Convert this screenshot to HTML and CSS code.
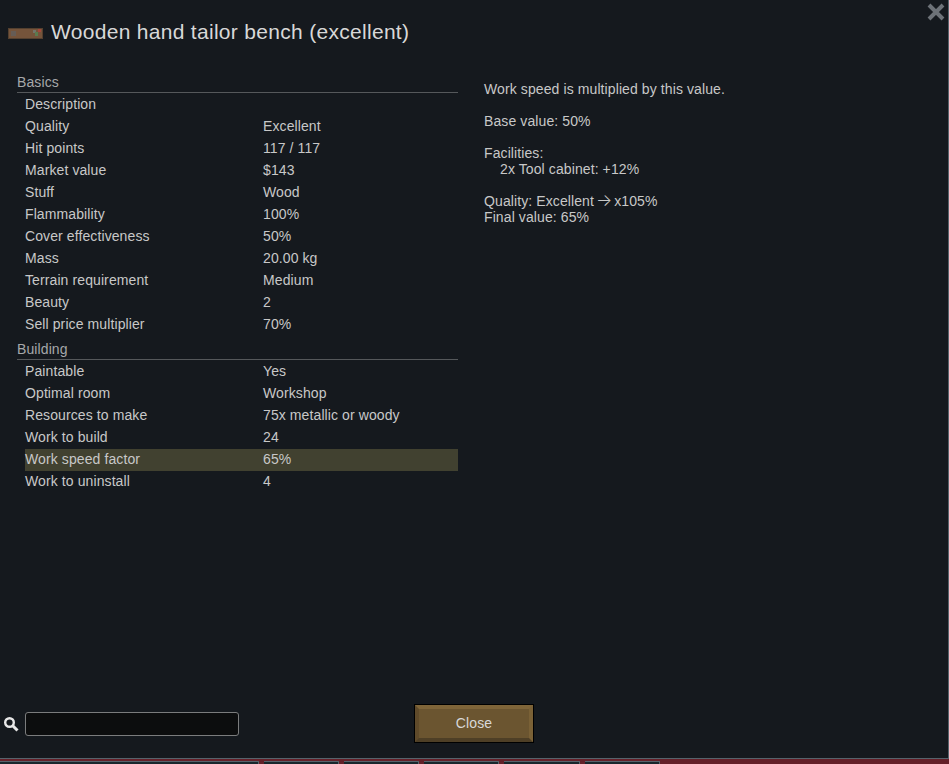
FILE: index.html
```html
<!DOCTYPE html>
<html lang="en">
<head>
    <meta charset="UTF-8">
    <link rel="stylesheet" href="styles.css">
    <title>Wooden hand tailor bench</title>
</head>
<body>
    <div class="panel">
        <svg class="close-x" width="20" height="20" viewBox="0 0 20 20">
            <path d="M3 3 L17 17 M17 3 L3 17" stroke="#6d7278" stroke-width="4" fill="none"/>
        </svg>

        <div class="title-row">
            <svg class="thing-icon" width="36" height="13" viewBox="0 0 36 13">
                <rect x="0" y="1" width="35" height="11" fill="#54402f"/>
                <rect x="1" y="2" width="33" height="9" fill="#75543b"/>
                <rect x="3" y="4" width="5" height="5" fill="#665c55"/>
                <rect x="25" y="3" width="3" height="3" fill="#737468"/>
                <rect x="27" y="5" width="3" height="4" fill="#5b7a4e"/>
                <rect x="30" y="2" width="3" height="3" fill="#a5483a"/>
            </svg>
            <div class="title">Wooden hand tailor bench (excellent)</div>
        </div>

        <div class="content">
            <div class="stats">
                <div class="section-head">Basics</div>
                <div class="stat-row"><div class="stat-label">Description</div><div class="stat-value"></div></div>
                <div class="stat-row"><div class="stat-label">Quality</div><div class="stat-value">Excellent</div></div>
                <div class="stat-row"><div class="stat-label">Hit points</div><div class="stat-value">117 / 117</div></div>
                <div class="stat-row"><div class="stat-label">Market value</div><div class="stat-value">$143</div></div>
                <div class="stat-row"><div class="stat-label">Stuff</div><div class="stat-value">Wood</div></div>
                <div class="stat-row"><div class="stat-label">Flammability</div><div class="stat-value">100%</div></div>
                <div class="stat-row"><div class="stat-label">Cover effectiveness</div><div class="stat-value">50%</div></div>
                <div class="stat-row"><div class="stat-label">Mass</div><div class="stat-value">20.00 kg</div></div>
                <div class="stat-row"><div class="stat-label">Terrain requirement</div><div class="stat-value">Medium</div></div>
                <div class="stat-row"><div class="stat-label">Beauty</div><div class="stat-value">2</div></div>
                <div class="stat-row"><div class="stat-label">Sell price multiplier</div><div class="stat-value">70%</div></div>

                <div class="section-head second">Building</div>
                <div class="stat-row"><div class="stat-label">Paintable</div><div class="stat-value">Yes</div></div>
                <div class="stat-row"><div class="stat-label">Optimal room</div><div class="stat-value">Workshop</div></div>
                <div class="stat-row"><div class="stat-label">Resources to make</div><div class="stat-value">75x metallic or woody</div></div>
                <div class="stat-row"><div class="stat-label">Work to build</div><div class="stat-value">24</div></div>
                <div class="stat-row active"><div class="stat-label">Work speed factor</div><div class="stat-value">65%</div></div>
                <div class="stat-row"><div class="stat-label">Work to uninstall</div><div class="stat-value">4</div></div>
            </div>

            <div class="details">
                <p>Work speed is multiplied by this value.</p>
                <p>Base value: 50%</p>
                <p>Facilities:<br><span class="indent">2x Tool cabinet: +12%</span></p>
                <p>Quality: Excellent <span class="arrow">→</span> x105%<br>Final value: 65%</p>
            </div>
        </div>

        <div class="footer">
            <svg class="search-icon" width="16" height="16" viewBox="0 0 16 16">
                <circle cx="6.5" cy="6.5" r="4.3" stroke="#e8e8e8" stroke-width="2.4" fill="none"/>
                <path d="M10 10 L14.5 14.5" stroke="#e8e8e8" stroke-width="3" fill="none"/>
            </svg>
            <input type="text" class="search-box">
            <div class="close-btn">Close</div>
        </div>
    </div>

    <div class="tabs">
        <div class="tab first"></div>
        <div class="tab"></div>
        <div class="tab"></div>
        <div class="tab"></div>
        <div class="tab"></div>
        <div class="tab"></div>
    </div>
</body>
</html>
```

FILE: styles.css
```css
body {
    margin: 0;
    width: 949px;
    height: 764px;
    overflow: hidden;
    font-family: "Liberation Sans", Arial, sans-serif;
    font-size: 14px;
    letter-spacing: 0.1px;
    color: #c8c8c8;
    background-color: #642029;
}

.panel {
    position: relative;
    box-sizing: border-box;
    height: 759px;
    display: flex;
    flex-direction: column;
    background-color: #15191e;
    border-right: 1px solid #56636c;
    border-bottom: 1px solid #56636c;
}

.close-x {
    position: absolute;
    top: 2px;
    right: 2px;
}

.title-row {
    display: flex;
    align-items: center;
    height: 64px;
    padding-left: 8px;
}

.thing-icon {
    margin-right: 7px;
    margin-top: 3px;
    filter: blur(0.5px);
}

.title {
    font-size: 21px;
    color: #d8d8d8;
    letter-spacing: 0.3px;
}

.content {
    flex: 1;
    display: flex;
}

.stats {
    width: 441px;
    margin-left: 17px;
    padding-top: 7px;
}

.section-head {
    height: 20px;
    padding-top: 1px;
    margin-bottom: 1px;
    line-height: 21px;
    border-bottom: 1px solid #55585b;
    color: #a6a8aa;
}

.section-head.second {
    margin-top: 2px;
}

.stat-row {
    display: flex;
    height: 22px;
    line-height: 20px;
    margin-left: 8px;
}

.stat-row.active {
    background-color: #414130;
}

.stat-label {
    width: 238px;
}

.details {
    margin-left: 26px;
    padding-top: 17px;
    line-height: 16px;
}

.details p {
    margin: 0 0 16px;
}

.indent {
    margin-left: 16px;
}

.arrow {
    font-family: Inter, sans-serif;
    font-size: 17px;
    font-weight: 300;
    line-height: 14px;
    letter-spacing: 0;
    margin: 0 -2px;
}

.footer {
    position: relative;
    display: flex;
    align-items: center;
    height: 68px;
    padding-left: 3px;
}

.search-icon {
    margin-right: 6px;
}

.search-box {
    box-sizing: border-box;
    width: 214px;
    height: 24px;
    padding: 0;
    border: 1px solid #7b7c7d;
    border-radius: 3px;
    background-color: #0c0d0e;
}

.close-btn {
    box-sizing: border-box;
    width: 118px;
    height: 37px;
    line-height: 28px;
    margin-left: 176px;
    margin-bottom: 1px;
    text-align: center;
    color: #d8d8d8;
    background-color: #6b5530;
    border-width: 4px;
    border-style: solid;
    border-color: #7f6539 #7a6136 #4e3f26 #5f4a2a;
    box-shadow: 0 0 0 1px #000;
}

.tabs {
    display: flex;
    gap: 5px;
    height: 3px;
    margin-top: 2px;
    width: 660px;
}

.tab {
    width: 75px;
    background-color: #18262c;
    border-top: 1px solid #56636c;
    border-right: 1px solid #56636c;
}

.tab.first {
    width: 260px;
}
```
